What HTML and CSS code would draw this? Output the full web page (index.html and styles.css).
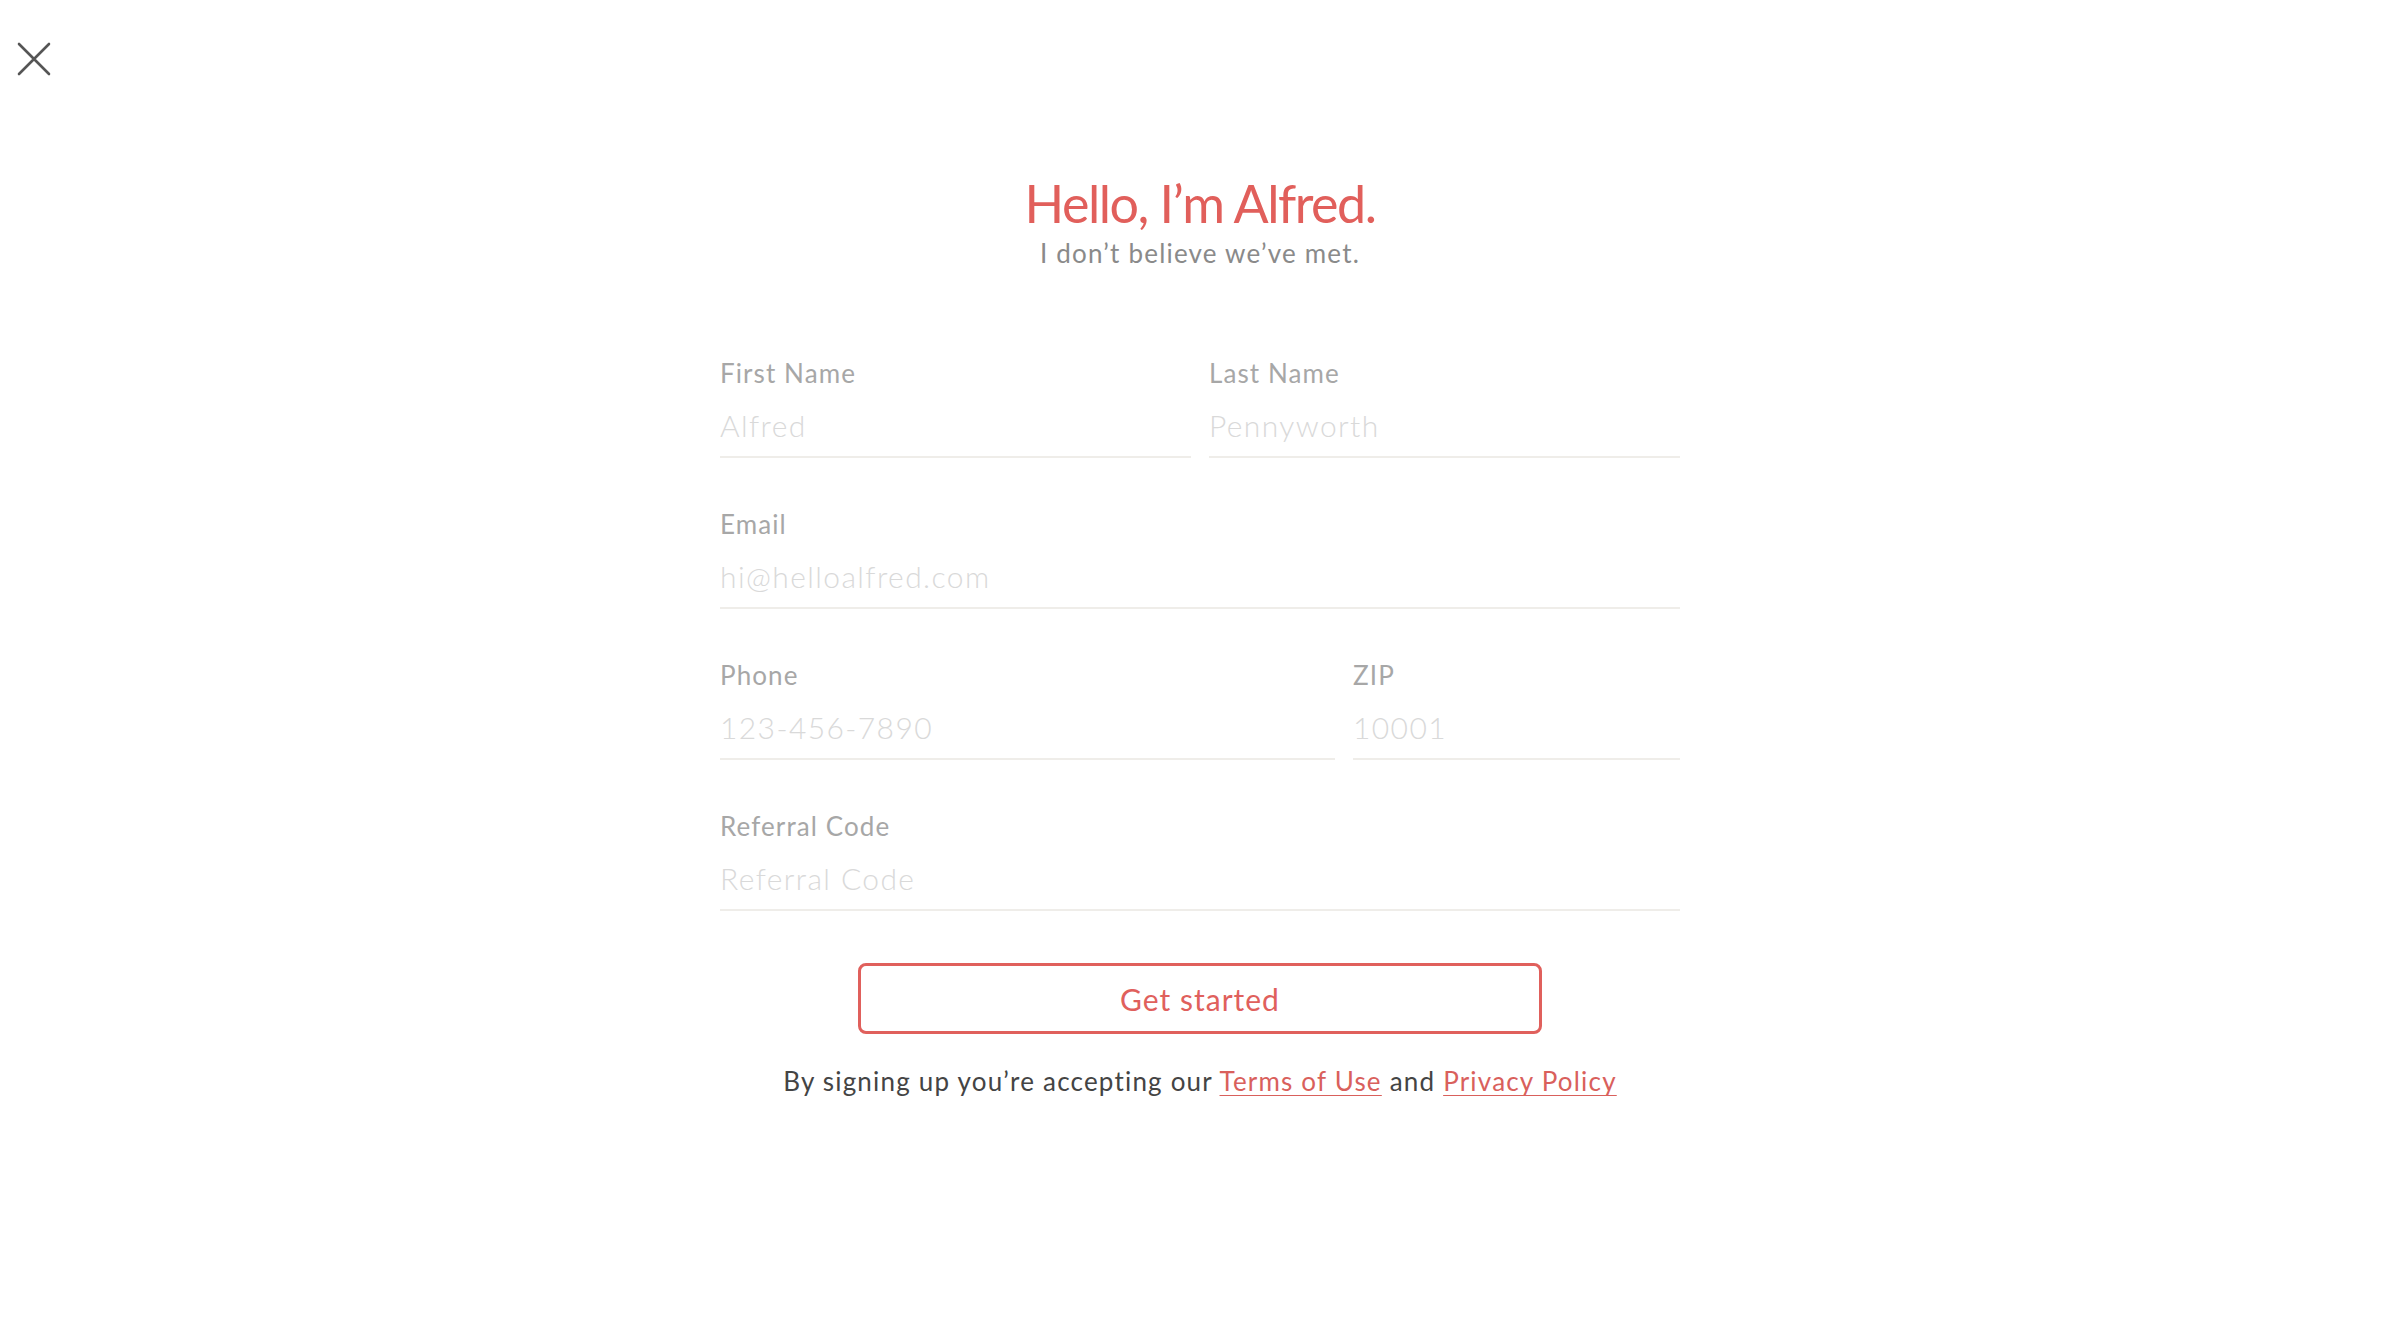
FILE: index.html
```html
<!DOCTYPE html>
<html lang="en">
<head>
<meta charset="utf-8">
<title>Hello, I'm Alfred</title>
<link rel="stylesheet" href="styles.css">
</head>
<body>
<div class="topbar">
  <button class="close" aria-label="Close">
    <svg width="34" height="34" viewBox="0 0 34 34"><path d="M2 2 L32 32 M32 2 L2 32" stroke="#555" stroke-width="2.6" fill="none" stroke-linecap="round"/></svg>
  </button>
</div>
<main class="page">
  <header class="hero">
    <h1 class="title">Hello, I’m Alfred.</h1>
    <p class="subtitle">I don’t believe we’ve met.</p>
  </header>
  <form class="form">
    <div class="row two">
      <label class="field"><span class="label">First Name</span><input class="input" type="text" placeholder="Alfred"></label>
      <label class="field"><span class="label">Last Name</span><input class="input" type="text" placeholder="Pennyworth"></label>
    </div>
    <div class="row">
      <label class="field"><span class="label">Email</span><input class="input" type="email" placeholder="hi@helloalfred.com"></label>
    </div>
    <div class="row phone-zip">
      <label class="field"><span class="label">Phone</span><input class="input" type="tel" placeholder="123-456-7890"></label>
      <label class="field"><span class="label">ZIP</span><input class="input" type="text" placeholder="10001"></label>
    </div>
    <div class="row">
      <label class="field"><span class="label">Referral Code</span><input class="input" type="text" placeholder="Referral Code"></label>
    </div>
    <button class="submit" type="button">Get started</button>
    <p class="legal">By signing up you’re accepting our <a href="#">Terms of Use</a> and <a href="#">Privacy Policy</a></p>
  </form>
</main>
</body>
</html>
```

FILE: styles.css
```css
html, body {
  margin: 0;
  padding: 0;
  background: #fff;
}
body {
  font-family: Lato, "Open Sans", "Liberation Sans", sans-serif;
  color: #444;
}
.topbar {
  padding: 42px 0 0 17px;
  height: 34px;
}
.close {
  display: block;
  border: 0;
  background: none;
  padding: 0;
  width: 34px;
  height: 34px;
  cursor: pointer;
}
.close svg { display: block; }
.page {
  width: 960px;
  margin: 0 auto;
}
.hero {
  margin-top: 97px;
  text-align: center;
}
.title {
  margin: 0;
  font-size: 52px;
  line-height: 60px;
  font-weight: 400;
  letter-spacing: -1.5px;
  color: #e15f5b;
}
.subtitle {
  margin: 5px 0 0;
  font-size: 26px;
  line-height: 30px;
  letter-spacing: 1.2px;
  color: #8a8a8a;
}
.form {
  margin-top: 90px;
  display: flex;
  flex-direction: column;
  gap: 51px;
}
.row {
  display: grid;
  grid-template-columns: 1fr;
  column-gap: 18px;
}
.row.two { grid-template-columns: 1fr 1fr; }
.row.phone-zip { grid-template-columns: 615fr 327fr; }
.field {
  display: flex;
  flex-direction: column;
}
.label {
  font-size: 26px;
  line-height: 30px;
  color: #a7a7a7;
  letter-spacing: 1.1px;
  margin-bottom: 12px;
}
.input {
  display: block;
  width: 100%;
  box-sizing: content-box;
  height: 50px;
  padding: 0 0 6px;
  margin: 0;
  border: 0;
  border-bottom: 2px solid #efede9;
  outline: none;
  font-family: Lato, "Open Sans", "Liberation Sans", sans-serif;
  font-weight: 300;
  font-size: 30px;
  letter-spacing: 1.4px;
  color: #444;
  background: transparent;
}
.input::placeholder { color: #d9d9d9; opacity: 1; }
.submit {
  align-self: center;
  margin-top: 1px;
  width: 684px;
  height: 71px;
  box-sizing: border-box;
  border: 3px solid #e0605c;
  border-radius: 8px;
  background: #fff;
  font-family: Lato, "Open Sans", "Liberation Sans", sans-serif;
  font-size: 30px;
  letter-spacing: 1px;
  color: #e0605c;
  cursor: pointer;
}
.legal {
  margin: -19px 0 0;
  text-align: center;
  font-size: 26px;
  line-height: 30px;
  letter-spacing: 1.2px;
  color: #444;
}
.legal a {
  color: #d9605c;
  text-decoration: underline;
  text-decoration-thickness: 2px;
  text-underline-offset: 4px;
}
```
